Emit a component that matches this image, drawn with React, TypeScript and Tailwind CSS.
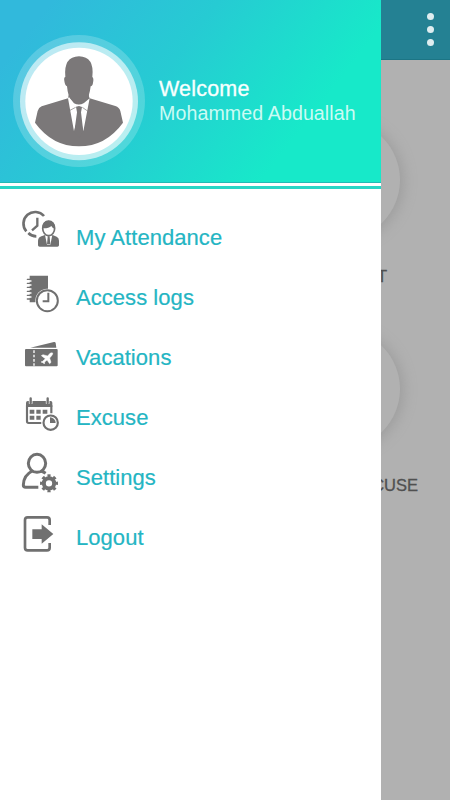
import type { ReactNode } from "react";

interface MenuItem {
  label: string;
  icon: ReactNode;
}

const AttendanceIcon = () => (
  <svg width="55" height="60" viewBox="0 0 165 180" fill="none">
    <g transform="translate(0 -9)">
      <path
        d="M87 33A33 33 0 1 0 34 79M40 84A34 34 0 0 0 64 94"
        stroke="#707070"
        strokeWidth="8"
      />
      <path d="M67 38V62L51 76" stroke="#707070" strokeWidth="7" />
      <path
        d="M69 121V107Q70 97 79 94L90 90H113L125 95Q132 98 132 107V121Q132 125 127 125H74Q69 125 69 121Z"
        fill="#707070"
      />
      <path d="M90 90L96 119H106L112 90L101 96Z" fill="#fff" />
      <path d="M98 96H104L106 118H96Z" fill="#707070" />
      <ellipse cx="101" cy="70" rx="18" ry="22" fill="#fff" stroke="#707070" strokeWidth="5" />
      <path d="M82 70Q82 47 101 47Q121 48 120 72Q113 71 109 63Q101 71 82 70Z" fill="#707070" />
    </g>
  </svg>
);

const LogsIcon = () => (
  <svg width="55" height="60" viewBox="0 0 165 180" fill="none">
    <path d="M44 23H99V66L76 103H44Z" fill="#707070" />
    <path
      d="M40 39H48M40 51H48M40 63H48M40 75H48M40 87H48"
      stroke="#fff"
      strokeWidth="4"
      strokeLinecap="round"
    />
    <path
      d="M37 34H49M37 46H49M37 58H49M37 70H49M37 82H49M37 93H49"
      stroke="#707070"
      strokeWidth="4"
      strokeLinecap="round"
    />
    <circle cx="97" cy="98" r="36" fill="#fff" />
    <circle cx="97" cy="98" r="31.5" stroke="#707070" strokeWidth="6" />
    <path d="M100 74V100H83" stroke="#707070" strokeWidth="6" />
  </svg>
);

const TicketIcon = () => (
  <svg width="55" height="60" viewBox="0 0 165 180" fill="none">
    <g transform="translate(0 21)">
      <path d="M46 38L117 21Q121 20 122 24L124 38Z" fill="#707070" />
      <rect x="30" y="42" width="98" height="52" rx="3" fill="#707070" />
      <path d="M57 46V92" stroke="#fff" strokeWidth="4" strokeDasharray="8 5" />
      <path
        d="M83 79L91 71L79 62L84 59L98 63L105 55Q111 52 113 54Q114 58 110 62L104 69L108 82L104 86L96 75L89 81L88 87L84 83L78 81Z"
        fill="#fff"
        stroke="#fff"
        strokeWidth="1.5"
      />
    </g>
  </svg>
);

const ExcuseIcon = () => (
  <svg width="55" height="60" viewBox="0 0 165 180" fill="none">
    <g transform="translate(0 6)">
      <path
        d="M36 46V94Q36 99 41 99H79M109 46V70"
        stroke="#707070"
        strokeWidth="6.5"
      />
      <path d="M33 51V38Q33 33 38 33H107Q112 33 112 38V51Z" fill="#707070" />
      <path d="M47 24V41M98 24V41" stroke="#fff" strokeWidth="11" />
      <path d="M47 25V39M98 25V39" stroke="#707070" strokeWidth="7" strokeLinecap="round" />
      <path
        d="M44 59H58V71H44ZM64 59H77V71H64ZM83 59H97V71H83ZM44 77H58V89H44ZM64 77H77V89H64Z"
        fill="#707070"
      />
      <circle cx="107" cy="98" r="27" fill="#fff" />
      <circle cx="107" cy="98" r="21.5" stroke="#707070" strokeWidth="6.5" />
      <path d="M105 82A17 17 0 0 1 122 99H105Z" fill="#707070" />
    </g>
  </svg>
);

const SettingsIcon = () => (
  <svg width="55" height="60" viewBox="0 0 165 180" fill="none">
    <ellipse cx="66" cy="46" rx="26" ry="27" stroke="#707070" strokeWidth="9" />
    <path
      d="M52 69Q26 81 25 111Q25 118 32 118H70M79 69Q86 72 92 76"
      stroke="#707070"
      strokeWidth="9"
    />
    <circle cx="102" cy="106" r="15.5" stroke="#707070" strokeWidth="12" />
    <circle
      cx="102"
      cy="106"
      r="22"
      stroke="#707070"
      strokeWidth="10"
      pathLength="80"
      strokeDasharray="5.2 4.8"
      strokeDashoffset="2.6"
    />
  </svg>
);

const LogoutIcon = () => (
  <svg width="55" height="60" viewBox="0 0 165 180" fill="none">
    <path
      d="M104 51V36Q104 28 96 28H38Q30 28 30 36V119Q30 127 38 127H96Q104 127 104 119V105"
      stroke="#707070"
      strokeWidth="8"
    />
    <path d="M52 64H80V49L115 78L80 107V93H52Z" fill="#707070" />
  </svg>
);

const menuItems: MenuItem[] = [
  { label: "My Attendance", icon: <AttendanceIcon /> },
  { label: "Access logs", icon: <LogsIcon /> },
  { label: "Vacations", icon: <TicketIcon /> },
  { label: "Excuse", icon: <ExcuseIcon /> },
  { label: "Settings", icon: <SettingsIcon /> },
  { label: "Logout", icon: <LogoutIcon /> },
];

function Avatar() {
  return (
    <svg width="132" height="132" viewBox="39 44 396 396" className="shrink-0">
      <circle cx="237" cy="242" r="198" fill="#fff" fillOpacity="0.2" />
      <circle cx="237" cy="243" r="177" fill="#fff" fillOpacity="0.6" />
      <circle cx="237" cy="243" r="161" fill="#fff" />
      <path
        d="M196 170Q190 109 237 108Q284 109 277 170Q282 174 279 187Q278 197 272 198Q270 215 266 226L269 234L346 257Q358 261 361 272L369 307Q317 378 237 378Q157 378 105 307L113 272Q116 261 125 258L204 234L206 225Q202 211 201 198Q195 196 193 182Q191 171 196 170Z"
        fill="#7b7879"
      />
      <path
        d="M204 234L222 333L237 280L250 333L269 234L252 248Q237 257 222 249L207 230Z"
        fill="#fff"
      />
      <path d="M206 226Q218 247 237 252Q257 246 267 226L264 218H209Z" fill="#7b7879" />
      <path
        d="M228 259L237 257L246 260L243 276L250 334L237 352L223 334L231 276Z"
        fill="#7b7879"
      />
      <path d="M208 271L227 261M247 261L264 273" stroke="#7b7879" strokeWidth="2" />
    </svg>
  );
}

function Drawer() {
  return (
    <aside className="absolute top-0 left-0 z-10 flex h-full w-[381px] flex-col bg-white">
      <header className="flex h-[183px] items-start gap-[14px] border-b border-[#23b9b4] bg-[linear-gradient(128deg,#31b9dc_10%,#26cbd3_42%,#17e9c9_77%)] pt-[35px] pl-[13px]">
        <Avatar />
        <div className="pt-[42px] whitespace-nowrap text-white">
          <div className="text-[21.5px] leading-6 tracking-[0.2px] [-webkit-text-stroke:0.35px_#e4fffb]">
            Welcome
          </div>
          <div className="text-[19.6px] leading-6 tracking-[0.1px] text-[#cbfbf4]">
            Mohammed Abduallah
          </div>
        </div>
      </header>
      <div className="mt-[3px] h-[3px] shrink-0 bg-[#29d6c5]" />
      <nav className="mt-[19px] flex flex-col">
        {menuItems.map((item) => (
          <a
            key={item.label}
            href="#"
            className="flex h-[60px] items-center gap-[6px] pl-[15px] text-[22px] tracking-[0.05px] text-[#24b5c3] [-webkit-text-stroke:0.2px_#24b5c3]"
          >
            {item.icon}
            <span className="-mt-[2px]">{item.label}</span>
          </a>
        ))}
      </nav>
    </aside>
  );
}

export default function App() {
  return (
    <div className="relative flex h-[800px] w-[450px] flex-col overflow-hidden bg-[#b1b1b1] font-['Liberation_Sans',Arial,sans-serif]">
      <div className="flex h-[60px] shrink-0 justify-end border-b border-[#1c7585] bg-[#248193] pr-4">
        <div className="flex flex-col gap-[6px] pt-[13px]">
          <span className="size-[7px] rounded-full bg-[#deedf0]" />
          <span className="size-[7px] rounded-full bg-[#deedf0]" />
          <span className="size-[7px] rounded-full bg-[#deedf0]" />
        </div>
      </div>

      {/* Dimmed tiles behind the drawer */}
      <main className="flex flex-col items-end pt-[60px] text-[16.5px] leading-5 text-[#505050] [-webkit-text-stroke:0.3px_#505050]">
        <div className="mr-[50px] size-[120px] rounded-full bg-[#b1b1b1] shadow-[2px_1px_14px_1px_#9c9c9c]" />
        <div className="mt-[26px] mr-[63px]">OUT</div>
        <div className="mt-[43px] mr-[50px] size-[120px] rounded-full bg-[#b1b1b1] shadow-[2px_1px_14px_1px_#9c9c9c]" />
        <div className="mt-[26px] mr-[32px]">EXCUSE</div>
      </main>

      <Drawer />
    </div>
  );
}
